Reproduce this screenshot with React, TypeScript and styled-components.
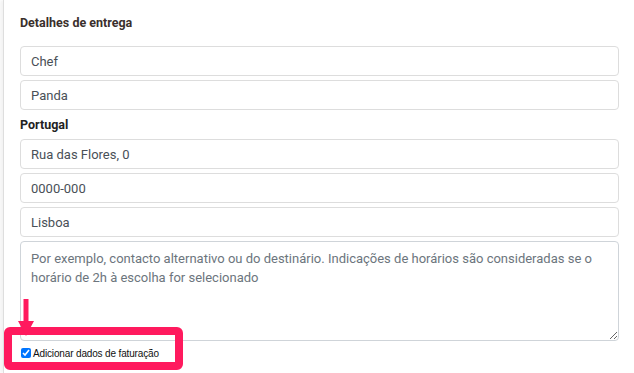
import React from 'react'
import styled, { createGlobalStyle } from 'styled-components';

const GlobalStyle = createGlobalStyle`
  html, body {
    margin: 0;
    padding: 0;
    background: #ffffff;
  }
  body {
    font-family: Roboto, "Liberation Sans", sans-serif;
  }
`;

const Page = styled.div`
  width: 634px;
  height: 373px;
  overflow: hidden;
  position: relative;
  background: #ffffff;
`;

const Panel = styled.div`
  margin-left: 3px;
  height: 100%;
  border-left: 1px solid #dedede;
  box-shadow: -3px 0 3px rgba(0, 0, 0, 0.05);
  padding: 12px 15px 0 16px;
  display: flex;
  flex-direction: column;
  box-sizing: border-box;
`;

const Heading = styled.h3`
  margin: 0 0 14px;
  padding-top: 1px;
  font-size: 12.5px;
  line-height: 19px;
  font-weight: 700;
  color: #3a2f2c;
`;

const Label = styled.div`
  margin: 1px 0 4px;
  font-size: 12.5px;
  line-height: 20px;
  font-weight: 700;
  color: #222;
`;

const Field = styled.input`
  display: block;
  height: 30px;
  margin: 0 0 4px;
  padding: 0 10px;
  box-sizing: border-box;
  width: 100%;
  border: 1px solid #dddddd;
  border-radius: 4px;
  font-family: Roboto, sans-serif;
  font-size: 13px;
  color: #495057;
  outline: none;
`;

const Notes = styled.textarea`
  display: block;
  height: 100px;
  width: 100%;
  box-sizing: border-box;
  padding: 7px 10px;
  border: 1px solid #cfd4d9;
  border-radius: 4px;
  font-family: Roboto, sans-serif;
  font-size: 13px;
  line-height: 19px;
  color: #495057;
  outline: none;
  resize: vertical;
  &::placeholder {
    color: #6c757d;
  }
`;

const CheckRow = styled.label`
  display: flex;
  align-items: center;
  gap: 1px;
  margin-top: 5px;
  height: 14px;
  font-family: "Liberation Sans", Arial, sans-serif;
  font-size: 10px;
  letter-spacing: -0.15px;
  color: #111;
`;

const Check = styled.input`
  width: 10px;
  height: 10px;
  margin: 0 1px 0 1px;
`;

const Highlight = styled.div`
  position: absolute;
  left: 4px;
  top: 327px;
  width: 179px;
  height: 43px;
  box-sizing: border-box;
  border: 8px solid #ff1a5e;
  border-radius: 6px;
  pointer-events: none;
`;

const Arrow = styled.svg`
  position: absolute;
  left: 16px;
  top: 299px;
  pointer-events: none;
`;

export default function App() {
  return (
    <Page>
      <GlobalStyle />
      <Panel>
        <Heading>Detalhes de entrega</Heading>
        <Field readOnly defaultValue="Chef" />
        <Field readOnly defaultValue="Panda" />
        <Label>Portugal</Label>
        <Field readOnly defaultValue="Rua das Flores, 0" />
        <Field readOnly defaultValue="0000-000" />
        <Field readOnly defaultValue="Lisboa" />
        <Notes placeholder="Por exemplo, contacto alternativo ou do destinário. Indicações de horários são consideradas se o horário de 2h à escolha for selecionado" />
        <CheckRow>
          <Check type="checkbox" defaultChecked />
          Adicionar dados de faturação
        </CheckRow>
      </Panel>
      <Highlight />
      <Arrow width="20" height="40" viewBox="0 0 20 40">
        <path d="M7.5 0 L12.5 0 L12.5 22 L18 22 L10 37 L2 22 L7.5 22 Z" fill="#ff1a5e" />
      </Arrow>
    </Page>
  );
}
